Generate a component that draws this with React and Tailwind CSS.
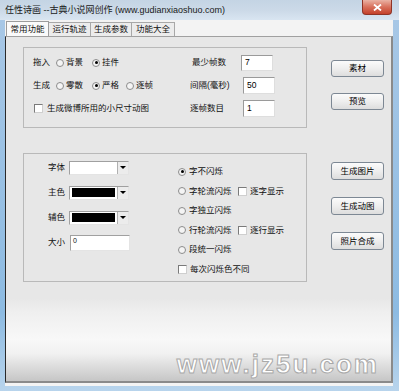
import React from "react";

const Radio = ({ checked }) => (
  <span className="flex h-[8px] w-[8px] items-center justify-center rounded-full border border-[#8c8c8c] bg-[#f4f4f4]">
    {checked && <span className="h-[3px] w-[3px] rounded-full bg-black" />}
  </span>
);

const Check = () => (
  <span className="block h-[9px] w-[9px] border border-[#7a7a7a] border-r-[#cfcfcf] border-b-[#cfcfcf] bg-white" />
);

const Btn = ({ children, h = "h-[17px]" }) => (
  <div
    className={`flex ${h} w-[53px] items-center justify-center rounded-[3px] border border-[#7d8894] bg-[linear-gradient(180deg,#fbfbfb_0%,#eeeeee_50%,#dddddd_100%)] text-[8.5px] text-black`}
  >
    {children}
  </div>
);

const TextBox = ({ value, h = "h-[16px]" }) => (
  <div className={`flex ${h} w-[32px] items-center border border-[#9a9a9a] border-r-[#dedede] border-b-[#dedede] bg-white pl-[3px] text-[8.5px] text-black`}>
    {value}
  </div>
);

const Select = ({ dark }) => (
  <div className="flex h-[14px] w-[60px] items-stretch border border-[#a0a0a0] border-r-[#e4e4e4] border-b-[#e4e4e4] bg-white">
    <div className="flex flex-1 items-center px-[2px]">
      {dark && <div className="h-[9px] w-full bg-black" />}
    </div>
    <div className="flex w-[11px] items-center justify-center border-l border-[#b0b0b0] bg-[#ececec]">
      <span className="h-0 w-0 border-x-[3px] border-t-[3px] border-x-transparent border-t-black" />
    </div>
  </div>
);

const Opt = ({ checked, label, className = "" }) => (
  <span className={`flex items-center gap-[2px] ${className}`}>
    <Radio checked={checked} />
    <span>{label}</span>
  </span>
);

export default function App() {
  return (
    <div className="flex h-[391px] w-[399px] flex-col bg-[linear-gradient(180deg,#a9c8e6_0%,#8dbbe2_80%,#b8d4ec_100%)] font-['Liberation_Sans','Noto_Sans_CJK_SC',sans-serif] text-[8.5px] text-[#111]">
      {/* title bar */}
      <div className="flex h-[20px] items-start justify-between bg-[linear-gradient(180deg,#c4d4e4_0%,#ccdae8_55%,#d9e5f1_100%)] pl-[5px] pr-[7px]">
        <span className="mt-[5px] text-[9px] leading-[10px] text-[#1a1a1a]">
          任性诗画 --古典小说网创作 (www.gudianxiaoshuo.com)
        </span>
        <div className="flex h-[15px] w-[30px] items-center justify-center rounded-b-[4px] border border-t-0 border-[#8f3426] bg-[linear-gradient(180deg,#eab2a4_0%,#d8705b_50%,#c4412b_100%)]">
          <svg width="9" height="7" viewBox="0 0 9 7">
            <path d="M1 0.5 L8 6.5 M8 0.5 L1 6.5" stroke="#fff" strokeWidth="1.8" />
          </svg>
        </div>
      </div>

      {/* client */}
      <div className="mb-[5px] ml-[5px] mr-[6px] flex flex-1 flex-col bg-[#f3f3f3]">
        {/* tabs */}
        <div className="flex h-[16px] items-end pl-[1px]">
          <div className="flex h-[15px] w-[43px] items-center justify-center border border-b-0 border-[#9c9c9c] bg-[#fafafa]">
            常用功能
          </div>
          <div className="flex h-[14px] w-[42px] items-center justify-center border border-b-0 border-l-0 border-[#a8a8a8] bg-[#ececec]">
            运行轨迹
          </div>
          <div className="flex h-[14px] w-[41px] items-center justify-center border border-b-0 border-l-0 border-[#a8a8a8] bg-[#ececec]">
            生成参数
          </div>
          <div className="flex h-[14px] w-[43px] items-center justify-center border border-b-0 border-l-0 border-[#a8a8a8] bg-[#ececec]">
            功能大全
          </div>
        </div>

        {/* panel */}
        <div className="mb-[3px] flex flex-1 flex-col border-l border-t border-b-2 border-r-2 border-l-[#2a2a2a] border-t-[#a0a0a0] border-b-[#8a8a8a] border-r-[#8a8a8a] bg-[linear-gradient(180deg,#e7e7e7_0%,#e7e7e7_76%,#efefef_80%,#f8f8f8_88%,#f1f1f1_92%,#c6c6c6_100%)] pl-[17px] pt-[10px]">
          {/* section 1 */}
          <div className="flex">
            <div className="flex h-[81px] w-[284px] flex-col border border-[#b9b9b9] pl-[9px] pt-[3px]">
              <div className="flex h-[23px] items-center">
                <div className="flex w-[157px] items-center">
                  <span className="w-[23px]">拖入</span>
                  <Opt label="背景" className="w-[36px]" />
                  <Opt checked label="挂件" />
                </div>
                <span className="w-[51px] pl-[2px]">最少帧数</span>
                <TextBox value="7" />
              </div>
              <div className="flex h-[23px] items-center">
                <div className="flex w-[157px] items-center">
                  <span className="w-[23px]">生成</span>
                  <Opt label="零散" className="w-[36px]" />
                  <Opt checked label="严格" className="w-[34px]" />
                  <Opt label="逐帧" />
                </div>
                <span className="w-[53px]">间隔(毫秒)</span>
                <TextBox value="50" h="h-[17px]" />
              </div>
              <div className="flex h-[23px] items-center">
                <div className="flex w-[157px] items-center gap-[4px] pl-[1px]">
                  <Check />
                  <span>生成微博所用的小尺寸动图</span>
                </div>
                <span className="w-[53px]">逐帧数目</span>
                <TextBox value="1" h="h-[17px]" />
              </div>
            </div>
            <div className="ml-[24px] flex flex-col gap-[16px] pt-[13px]">
              <Btn>素材</Btn>
              <Btn>预览</Btn>
            </div>
          </div>

          {/* section 2 */}
          <div className="mt-[25px] flex">
            <div className="flex h-[129px] w-[284px] border border-[#b9b9b9]">
              <div className="flex w-[154px] flex-col pl-[24px] pt-[1px]">
                <div className="flex h-[25px] items-center">
                  <span className="w-[21px]">字体</span>
                  <Select />
                </div>
                <div className="flex h-[25px] items-center">
                  <span className="w-[21px]">主色</span>
                  <Select dark />
                </div>
                <div className="flex h-[25px] items-center">
                  <span className="w-[21px]">辅色</span>
                  <Select dark />
                </div>
                <div className="flex h-[25px] items-center">
                  <span className="w-[22px]">大小</span>
                  <div className="h-[16px] w-[60px] border border-[#a0a0a0] border-r-[#e4e4e4] border-b-[#e4e4e4] bg-white pl-[2px] text-[7px] leading-[9px]">
                    0
                  </div>
                </div>
              </div>
              <div className="flex flex-col pt-[8px]">
                <div className="flex h-[19.5px] items-center gap-[3px]">
                  <Radio checked />
                  <span>字不闪烁</span>
                </div>
                <div className="flex h-[19.5px] items-center">
                  <span className="flex w-[60px] items-center gap-[3px]">
                    <Radio />
                    <span>字轮流闪烁</span>
                  </span>
                  <span className="flex items-center gap-[3px]">
                    <Check />
                    <span>逐字显示</span>
                  </span>
                </div>
                <div className="flex h-[19.5px] items-center gap-[3px]">
                  <Radio />
                  <span>字独立闪烁</span>
                </div>
                <div className="flex h-[19.5px] items-center">
                  <span className="flex w-[60px] items-center gap-[3px]">
                    <Radio />
                    <span>行轮流闪烁</span>
                  </span>
                  <span className="flex items-center gap-[3px]">
                    <Check />
                    <span>逐行显示</span>
                  </span>
                </div>
                <div className="flex h-[19.5px] items-center gap-[3px]">
                  <Radio />
                  <span>段统一闪烁</span>
                </div>
                <div className="flex h-[19.5px] items-center gap-[3px]">
                  <Check />
                  <span>每次闪烁色不同</span>
                </div>
              </div>
            </div>
            <div className="ml-[24px] flex flex-col gap-[17px] pt-[9px]">
              <Btn h="h-[18px]">生成图片</Btn>
              <Btn h="h-[18px]">生成动图</Btn>
              <Btn h="h-[18px]">照片合成</Btn>
            </div>
          </div>

          {/* watermark */}
          <div className="flex flex-1 items-end justify-end pb-[4px] pr-[12px]">
            <span className="text-[26px] font-bold leading-[26px] tracking-[2px] text-white [-webkit-text-stroke:1px_#a9a9a9]">
              www.jz5u.com
            </span>
          </div>
        </div>
      </div>
    </div>
  );
}
